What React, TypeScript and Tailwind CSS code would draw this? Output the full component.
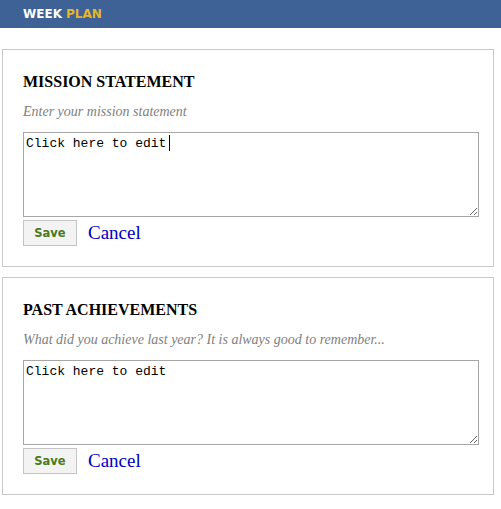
import { useState } from 'react';

type Section = {
  title: string;
  hint: string;
  focused?: boolean;
};

const sections: Section[] = [
  { title: 'MISSION STATEMENT', hint: 'Enter your mission statement', focused: true },
  { title: 'PAST ACHIEVEMENTS', hint: 'What did you achieve last year? It is always good to remember...' },
];

function EditBox({ title, hint, focused }: Section) {
  const [text, setText] = useState('Click here to edit');

  return (
    <div className="border border-[#c9c9c9] bg-white pl-5 pr-[14px] pt-[22px] pb-5">
      <h2 className="font-['Liberation_Serif',serif] text-[16px] leading-[19px] font-bold text-black">{title}</h2>
      <p className="mt-3 font-['Liberation_Serif',serif] text-[14px] leading-[17px] italic text-[#808080]">{hint}</p>
      <div className="relative mt-3">
        <textarea
          value={text}
          onChange={(e) => setText(e.target.value)}
          className="block h-[85px] w-[456px] resize border border-[#a6a6a6] bg-white px-[2px] pt-[3px] font-['Liberation_Mono',monospace] text-[13px] leading-[15px] text-black caret-transparent outline-none"
        />
        {/* blinking caret stand-in for the focused box */}
        {focused && <span className="absolute left-[146px] top-[3px] h-[16px] w-px bg-black" />}
      </div>
      <div className="mt-[3px] flex items-center gap-[11px]">
        <button className="h-[26px] w-[54px] border border-[#c4c4c4] bg-[#f3f3f3] pt-px font-['DejaVu_Sans',sans-serif] text-[11.5px] font-bold text-[#4b7b16]">
          Save
        </button>
        <a href="#" className="font-['Liberation_Serif',serif] text-[19px] leading-[22px] text-[#0000c0]">
          Cancel
        </a>
      </div>
    </div>
  );
}

export default function App() {
  return (
    <div className="min-h-[509px] w-[501px] bg-white">
      <header className="flex h-7 items-center bg-[#3e6196] pl-[23px] font-['DejaVu_Sans',sans-serif] text-[12px] font-bold">
        <span className="text-white">WEEK</span>
        <span className="ml-[4px] text-[#e8b526]">PLAN</span>
      </header>
      <div className="ml-[2px] mt-[21px] flex w-[492px] flex-col gap-[10px]">
        {sections.map((s) => (
          <EditBox key={s.title} {...s} />
        ))}
      </div>
    </div>
  );
}
